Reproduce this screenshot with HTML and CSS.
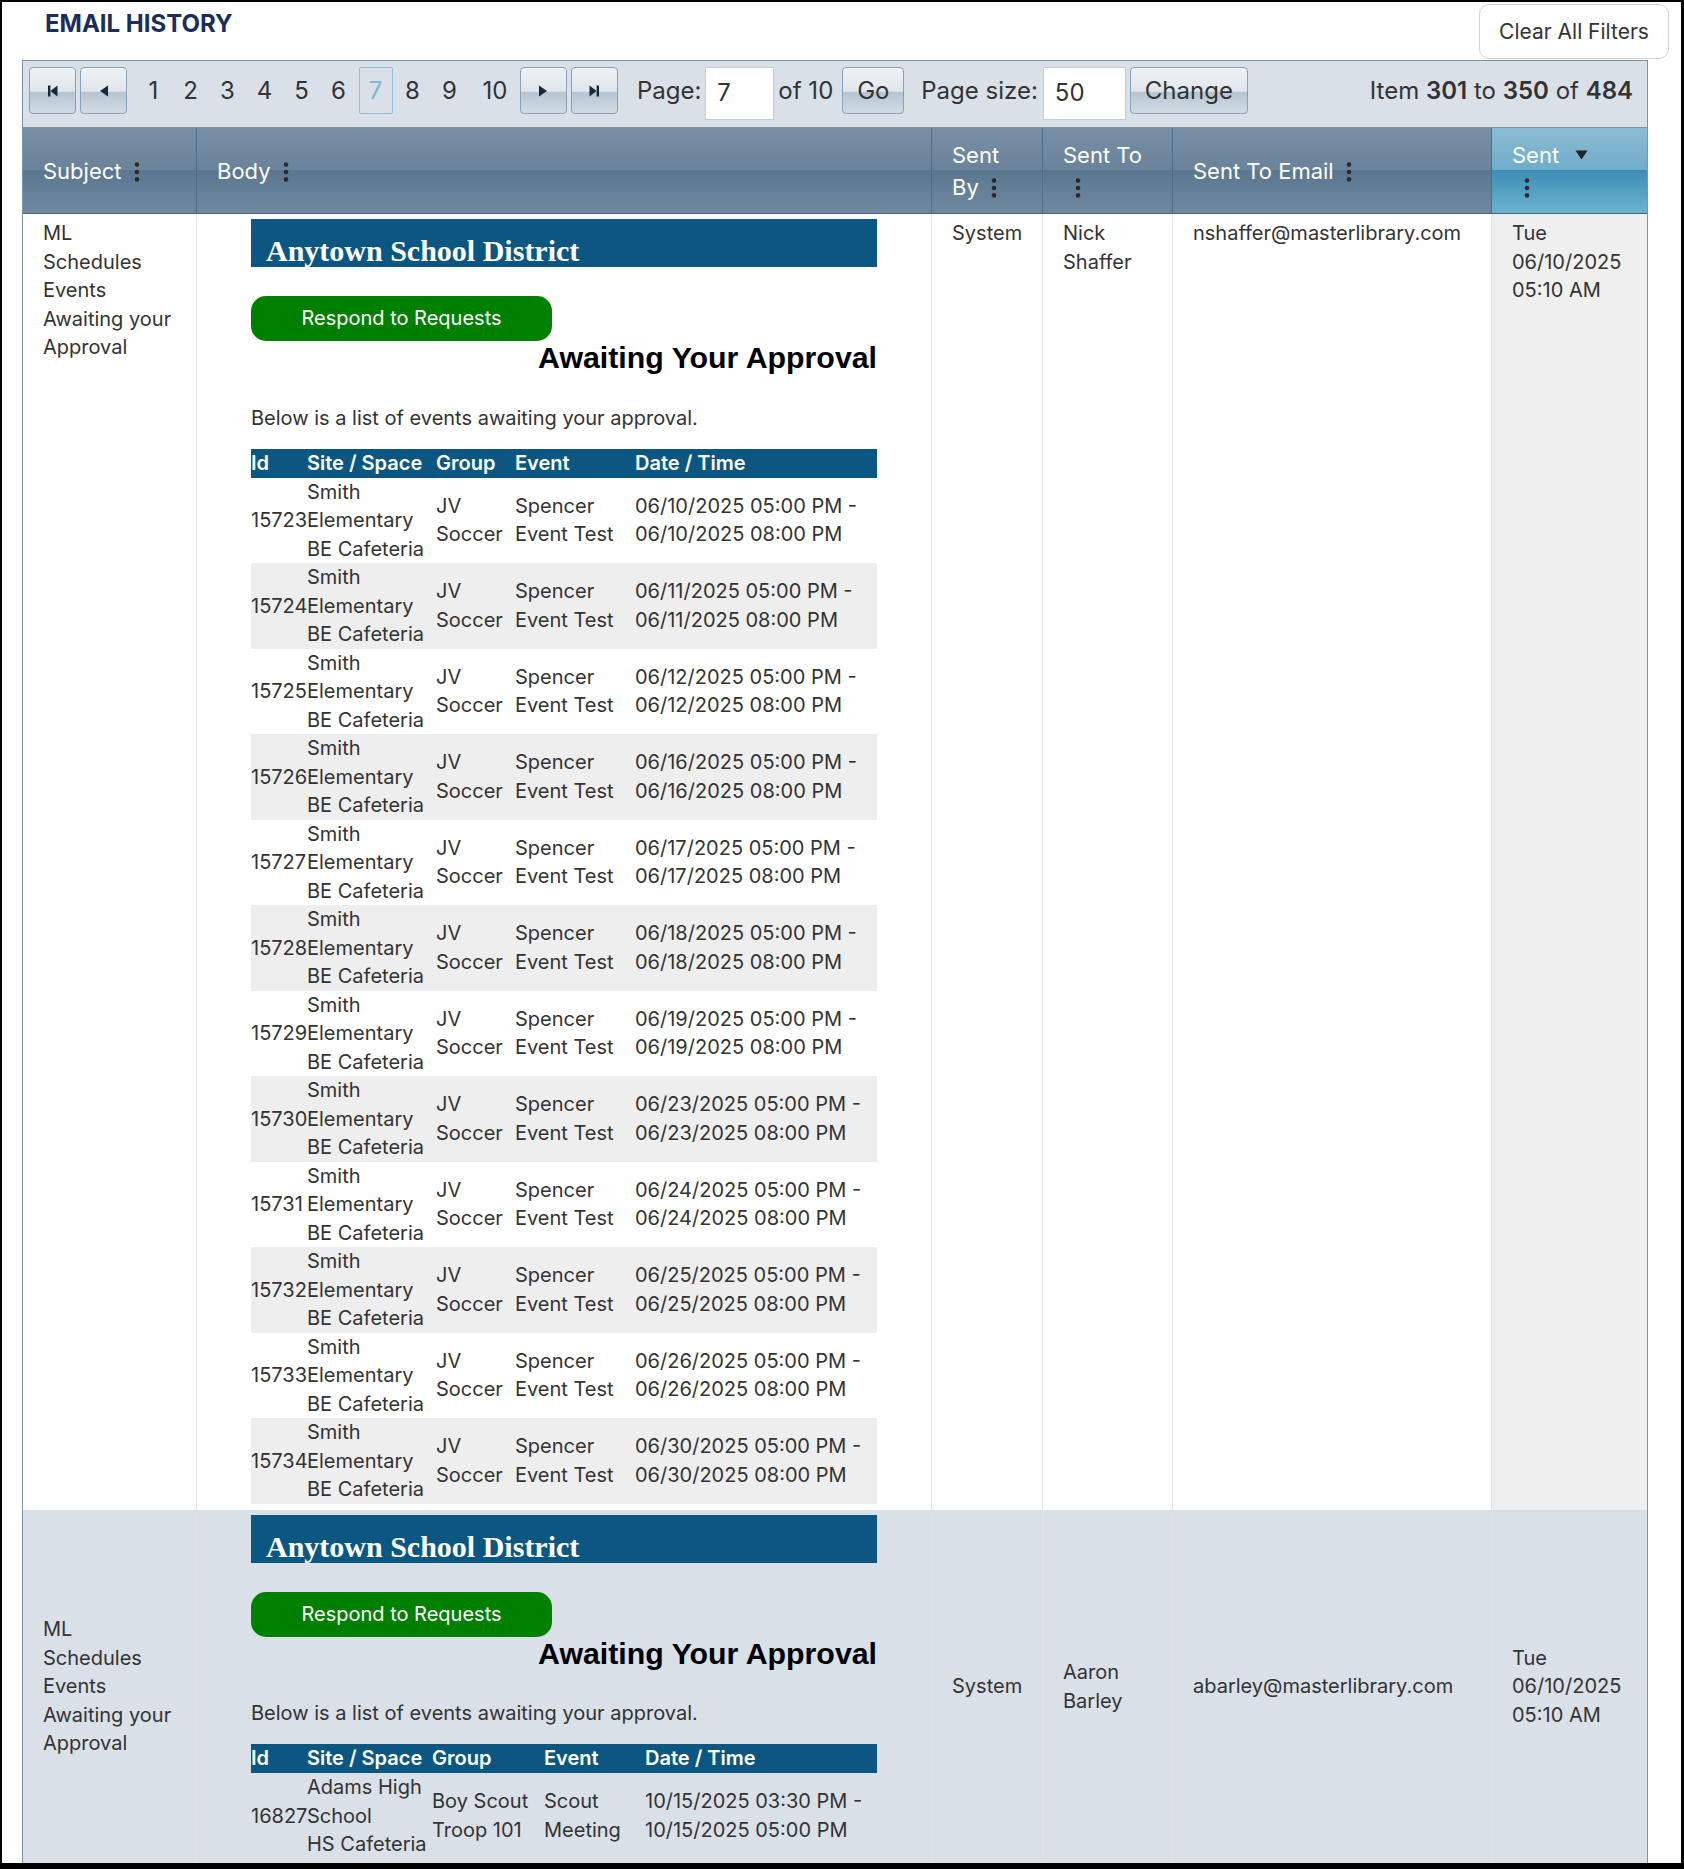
FILE: index.html
```html
<!DOCTYPE html>
<html lang="en">
<head>
  <meta charset="UTF-8">
  <title>Email History</title>
  <link rel="stylesheet" href="styles.css">
</head>
<body>
<div class="frame">
  <div class="page-head">
    <h1 class="page-title">EMAIL HISTORY</h1>
    <button class="clear-btn" type="button">Clear All Filters</button>
  </div>

  <div class="grid-wrap">
    <!-- pager -->
    <div class="pager">
      <button class="pg-btn" type="button" title="First page">
        <svg viewBox="0 0 16 16" width="16" height="16"><rect x="3" y="2.5" width="2.4" height="11" fill="#17283a"/><path d="M12.5 2.5 L5.4 8 L12.5 13.5 Z" fill="#17283a"/></svg>
      </button>
      <button class="pg-btn" type="button" title="Previous page">
        <svg viewBox="0 0 16 16" width="16" height="16"><path d="M12 2.5 L4 8 L12 13.5 Z" fill="#17283a"/></svg>
      </button>
      <div class="pg-nums">
        <a class="pg-num">1</a>
        <a class="pg-num">2</a>
        <a class="pg-num">3</a>
        <a class="pg-num">4</a>
        <a class="pg-num">5</a>
        <a class="pg-num">6</a>
        <a class="pg-num current">7</a>
        <a class="pg-num">8</a>
        <a class="pg-num">9</a>
        <a class="pg-num">10</a>
      </div>
      <button class="pg-btn" type="button" title="Next page">
        <svg viewBox="0 0 16 16" width="16" height="16"><path d="M4 2.5 L12 8 L4 13.5 Z" fill="#17283a"/></svg>
      </button>
      <button class="pg-btn" type="button" title="Last page">
        <svg viewBox="0 0 16 16" width="16" height="16"><path d="M3.5 2.5 L10.6 8 L3.5 13.5 Z" fill="#17283a"/><rect x="10.6" y="2.5" width="2.4" height="11" fill="#17283a"/></svg>
      </button>
      <span class="pg-label page-label">Page:</span>
      <input class="pg-input page-input" type="text" value="7">
      <span class="pg-label of-label">of 10</span>
      <button class="pg-btn text-btn go-btn" type="button">Go</button>
      <span class="pg-label size-label">Page size:</span>
      <input class="pg-input size-input" type="text" value="50">
      <button class="pg-btn text-btn change-btn" type="button">Change</button>
      <span class="pg-label pg-info">Item <b>301</b> to <b>350</b> of <b>484</b></span>
    </div>

    <table class="grid">
      <colgroup>
        <col class="c-subject">
        <col class="c-body">
        <col class="c-by">
        <col class="c-to">
        <col class="c-email">
        <col class="c-sent">
      </colgroup>
      <thead>
        <tr>
          <th>Subject<span class="kebab"><svg viewBox="0 0 22 20" width="22" height="20"><circle cx="11" cy="2.6" r="2.3"/><circle cx="11" cy="10" r="2.3"/><circle cx="11" cy="17.4" r="2.3"/></svg></span></th>
          <th>Body<span class="kebab"><svg viewBox="0 0 22 20" width="22" height="20"><circle cx="11" cy="2.6" r="2.3"/><circle cx="11" cy="10" r="2.3"/><circle cx="11" cy="17.4" r="2.3"/></svg></span></th>
          <th>Sent By<span class="kebab"><svg viewBox="0 0 22 20" width="22" height="20"><circle cx="11" cy="2.6" r="2.3"/><circle cx="11" cy="10" r="2.3"/><circle cx="11" cy="17.4" r="2.3"/></svg></span></th>
          <th>Sent To<span class="kebab"><svg viewBox="0 0 22 20" width="22" height="20"><circle cx="11" cy="2.6" r="2.3"/><circle cx="11" cy="10" r="2.3"/><circle cx="11" cy="17.4" r="2.3"/></svg></span></th>
          <th>Sent To Email<span class="kebab"><svg viewBox="0 0 22 20" width="22" height="20"><circle cx="11" cy="2.6" r="2.3"/><circle cx="11" cy="10" r="2.3"/><circle cx="11" cy="17.4" r="2.3"/></svg></span></th>
          <th class="sorted">Sent<span class="sort-icon"><svg viewBox="0 0 13 10" width="13" height="10"><path d="M0.5 0.5 H12.5 L6.5 9.5 Z" fill="#222"/></svg></span><span class="kebab"><svg viewBox="0 0 22 20" width="22" height="20"><circle cx="11" cy="2.6" r="2.3"/><circle cx="11" cy="10" r="2.3"/><circle cx="11" cy="17.4" r="2.3"/></svg></span></th>
        </tr>
      </thead>
      <tbody>
        <tr class="top">
          <td>ML Schedules Events Awaiting your Approval</td>
          <td class="body-cell">
            <div class="mail">
              <div class="mail-banner">Anytown School District</div>
              <a class="respond-btn">Respond to Requests</a>
              <h2 class="mail-title">Awaiting Your Approval</h2>
              <p class="mail-intro">Below is a list of events awaiting your approval.</p>
              <table class="events">
                <colgroup>
                  <col class="ev-id"><col class="ev-site"><col class="ev-group"><col class="ev-event"><col class="ev-date">
                </colgroup>
                <thead>
                  <tr><th>Id</th><th>Site / Space</th><th>Group</th><th>Event</th><th>Date / Time</th></tr>
                </thead>
                <tbody>
                  <tr><td>15723</td><td>Smith Elementary<br>BE Cafeteria</td><td>JV Soccer</td><td>Spencer Event Test</td><td>06/10/2025 05:00 PM -<br>06/10/2025 08:00 PM</td></tr>
                  <tr><td>15724</td><td>Smith Elementary<br>BE Cafeteria</td><td>JV Soccer</td><td>Spencer Event Test</td><td>06/11/2025 05:00 PM -<br>06/11/2025 08:00 PM</td></tr>
                  <tr><td>15725</td><td>Smith Elementary<br>BE Cafeteria</td><td>JV Soccer</td><td>Spencer Event Test</td><td>06/12/2025 05:00 PM -<br>06/12/2025 08:00 PM</td></tr>
                  <tr><td>15726</td><td>Smith Elementary<br>BE Cafeteria</td><td>JV Soccer</td><td>Spencer Event Test</td><td>06/16/2025 05:00 PM -<br>06/16/2025 08:00 PM</td></tr>
                  <tr><td>15727</td><td>Smith Elementary<br>BE Cafeteria</td><td>JV Soccer</td><td>Spencer Event Test</td><td>06/17/2025 05:00 PM -<br>06/17/2025 08:00 PM</td></tr>
                  <tr><td>15728</td><td>Smith Elementary<br>BE Cafeteria</td><td>JV Soccer</td><td>Spencer Event Test</td><td>06/18/2025 05:00 PM -<br>06/18/2025 08:00 PM</td></tr>
                  <tr><td>15729</td><td>Smith Elementary<br>BE Cafeteria</td><td>JV Soccer</td><td>Spencer Event Test</td><td>06/19/2025 05:00 PM -<br>06/19/2025 08:00 PM</td></tr>
                  <tr><td>15730</td><td>Smith Elementary<br>BE Cafeteria</td><td>JV Soccer</td><td>Spencer Event Test</td><td>06/23/2025 05:00 PM -<br>06/23/2025 08:00 PM</td></tr>
                  <tr><td>15731</td><td>Smith Elementary<br>BE Cafeteria</td><td>JV Soccer</td><td>Spencer Event Test</td><td>06/24/2025 05:00 PM -<br>06/24/2025 08:00 PM</td></tr>
                  <tr><td>15732</td><td>Smith Elementary<br>BE Cafeteria</td><td>JV Soccer</td><td>Spencer Event Test</td><td>06/25/2025 05:00 PM -<br>06/25/2025 08:00 PM</td></tr>
                  <tr><td>15733</td><td>Smith Elementary<br>BE Cafeteria</td><td>JV Soccer</td><td>Spencer Event Test</td><td>06/26/2025 05:00 PM -<br>06/26/2025 08:00 PM</td></tr>
                  <tr><td>15734</td><td>Smith Elementary<br>BE Cafeteria</td><td>JV Soccer</td><td>Spencer Event Test</td><td>06/30/2025 05:00 PM -<br>06/30/2025 08:00 PM</td></tr>
                </tbody>
              </table>
            </div>
          </td>
          <td>System</td>
          <td>Nick Shaffer</td>
          <td>nshaffer@masterlibrary.com</td>
          <td class="sorted">Tue 06/10/2025 05:10 AM</td>
        </tr>

        <tr class="alt">
          <td>ML Schedules Events Awaiting your Approval</td>
          <td class="body-cell">
            <div class="mail">
              <div class="mail-banner">Anytown School District</div>
              <a class="respond-btn">Respond to Requests</a>
              <h2 class="mail-title">Awaiting Your Approval</h2>
              <p class="mail-intro">Below is a list of events awaiting your approval.</p>
              <table class="events events-wide-group">
                <colgroup>
                  <col class="ev-id"><col class="ev-site"><col class="ev-group"><col class="ev-event"><col class="ev-date">
                </colgroup>
                <thead>
                  <tr><th>Id</th><th>Site / Space</th><th>Group</th><th>Event</th><th>Date / Time</th></tr>
                </thead>
                <tbody>
                  <tr><td>16827</td><td>Adams High School<br>HS Cafeteria</td><td>Boy Scout Troop 101</td><td>Scout Meeting</td><td>10/15/2025 03:30 PM -<br>10/15/2025 05:00 PM</td></tr>
                </tbody>
              </table>
            </div>
          </td>
          <td>System</td>
          <td>Aaron Barley</td>
          <td>abarley@masterlibrary.com</td>
          <td class="sorted">Tue 06/10/2025 05:10 AM</td>
        </tr>

        <!-- next record starts below the fold -->
        <tr class="top filler">
          <td></td>
          <td class="body-cell"></td>
          <td></td>
          <td></td>
          <td></td>
          <td class="sorted"></td>
        </tr>
      </tbody>
    </table>
  </div>
</div>
</body>
</html>
```

FILE: styles.css
```css
body {
  margin: 0;
  font-family: Inter, "Noto Sans", Arial, sans-serif;
  color: #333;
  background: #fff;
}

.frame {
  height: 1869px;
  box-sizing: border-box;
  border: 3px solid #000;
  border-top-width: 2px;
  border-left-width: 2px;
  border-bottom-width: 6px;
  overflow: hidden;
  background: #fff;
}

/* title row */
.page-head {
  display: flex;
  justify-content: space-between;
  align-items: flex-start;
  height: 58px;
  box-sizing: border-box;
  padding: 2px 12px 0 43px;
}

.page-title {
  margin: 5px 0 0;
  font-size: 24px;
  font-weight: 700;
  color: #1b2d5b;
}

.clear-btn {
  width: 190px;
  height: 55px;
  background: #fff;
  border: 1px solid #d2d2d2;
  border-radius: 10px;
  font-family: Inter, "Noto Sans", Arial, sans-serif;
  font-size: 21px;
  color: #333;
}

.grid-wrap {
  margin: 0 33px 0 20px;
  border-left: 1px solid #7e93a8;
  border-right: 1px solid #7e93a8;
}

/* pager toolbar */
.pager {
  display: flex;
  align-items: flex-start;
  height: 68px;
  box-sizing: border-box;
  padding: 6px 14px 0 6px;
  background: #dae0e7;
  border-top: 1px solid #7e93a8;
  border-bottom: 1px solid #7e93a8;
  font-size: 24px;
}

.pg-btn {
  display: flex;
  align-items: center;
  justify-content: center;
  width: 47px;
  height: 47px;
  box-sizing: border-box;
  margin-right: 4px;
  padding: 0;
  border: 1px solid #8aa0b4;
  border-radius: 4px;
  background: linear-gradient(#eef2f5, #dfe6eb 52%, #b4c4d0 53%, #d2dce4);
  font-family: inherit;
  font-size: 24px;
  color: #333;
}

.pg-nums {
  display: flex;
  margin: 0 2px 0 4px;
}

.pg-num {
  min-width: 34px;
  height: 47px;
  box-sizing: border-box;
  margin: 0 1.5px;
  padding: 0 8px;
  border: 1px solid transparent;
  border-radius: 2px;
  line-height: 45px;
  text-align: center;
  color: #333;
}

.pg-num:last-child {
  padding-left: 12px;
}

.pg-num.current {
  border-color: #8cc1da;
  color: #7fb6d3;
}

.pg-label {
  line-height: 47px;
  white-space: nowrap;
}

.page-label { margin-left: 15px; }
.of-label { margin-left: 4px; }
.size-label { margin-left: 17px; }

.pg-input {
  height: 53px;
  box-sizing: border-box;
  padding: 0 11px 2px;
  border: 1px solid #c3ccd4;
  background: #fff;
  font-family: inherit;
  font-size: 24px;
  color: #333;
}

.page-input { width: 69px; margin-left: 4px; }
.size-input { width: 83px; margin-left: 5px; }

.text-btn { margin-right: 0; }
.go-btn { width: 62px; margin-left: 9px; }
.change-btn { width: 118px; margin-left: 4px; }

.pg-info { margin-left: auto; }

.pg-info b {
  font-weight: 600;
}

/* main grid */
.grid {
  width: 100%;
  table-layout: fixed;
  border-collapse: separate;
  border-spacing: 0;
  font-size: 20px;
  line-height: 28.6px;
}

.c-subject { width: 173px; }
.c-body { width: 735px; }
.c-by { width: 111px; }
.c-to { width: 130px; }
.c-email { width: 319px; }
.c-sent { width: 156px; }

.grid > thead > tr {
  height: 86px;
}

.grid > thead > tr > th {
  padding: 0 22px 0 20px;
  text-align: left;
  vertical-align: middle;
  font-size: 22px;
  font-weight: 400;
  line-height: 32px;
  color: #fff;
  background: linear-gradient(#7790a5, #6a839a 50%, #5b7790 50%, #6f89a0);
  border-bottom: 1px solid #4a647e;
}

.grid > thead > tr > th + th {
  border-left: 1px solid #526c86;
}

.grid > thead > tr > th.sorted {
  background: linear-gradient(#8cbbd4, #6eaccb 50%, #3c8cb6 50%, #6cb5d0);
}

.kebab {
  display: inline-block;
  width: 22px;
  height: 20px;
  margin-left: 4px;
  vertical-align: -3px;
  fill: #2b2b2b;
}

.kebab svg {
  display: block;
}

.sort-icon {
  display: inline-block;
  width: 44px;
  height: 10px;
  overflow: hidden;
  text-align: center;
  vertical-align: 3px;
}

.sort-icon svg {
  display: block;
  margin: 0 auto;
}

.grid > tbody > tr > td {
  padding: 5px 22px 6px 20px;
  vertical-align: top;
  background: #fff;
}

.grid > tbody > tr > td + td {
  border-left: 1px solid #dfe3e8;
}

.grid > tbody > tr > td.sorted {
  background: #efefef;
}

.grid > tbody > tr.alt > td,
.grid > tbody > tr.alt > td.sorted {
  vertical-align: middle;
  background: #dae0e7;
}

.grid > tbody > tr > td.body-cell {
  padding-left: 20px;
  padding-right: 20px;
}

.grid > tbody > tr.filler > td {
  height: 200px;
}

/* email body preview */
.mail {
  width: 626px;
  margin: 0 auto;
}

.mail-banner {
  height: 48px;
  box-sizing: border-box;
  padding: 17px 0 0 15px;
  background: #0b5781;
  color: #fff;
  font-family: "Liberation Serif", "Times New Roman", serif;
  font-size: 30px;
  font-weight: 700;
  line-height: 30px;
  white-space: nowrap;
}

.respond-btn {
  display: block;
  width: 301px;
  height: 45px;
  margin-top: 29px;
  border-radius: 15px;
  background: #008000;
  color: #fff;
  text-align: center;
  line-height: 45px;
  font-size: 20px;
}

.mail-title {
  margin: 0;
  text-align: right;
  font-family: "Liberation Sans", Arial, sans-serif;
  font-size: 30.3px;
  font-weight: 700;
  line-height: 34.5px;
  color: #000;
}

.mail-intro {
  margin: 28px 0 17px;
  font-size: 20px;
  line-height: 28px;
}

.events {
  width: 100%;
  table-layout: fixed;
  border-collapse: collapse;
  border-spacing: 0;
  font-size: 20px;
  line-height: 28.5px;
}

.ev-id { width: 56px; }
.ev-site { width: 129px; }
.ev-group { width: 79px; }
.ev-event { width: 120px; }
.ev-date { width: 242px; }

.events-wide-group .ev-site { width: 125px; }
.events-wide-group .ev-group { width: 112px; }
.events-wide-group .ev-event { width: 101px; }
.events-wide-group .ev-date { width: 232px; }

.events th {
  height: 29px;
  padding: 0;
  text-align: left;
  font-weight: 600;
  line-height: 29px;
  color: #fff;
  background: #0b5781;
  white-space: nowrap;
}

.events td {
  padding: 0;
  vertical-align: middle;
}

.events tbody tr:nth-child(even) td {
  background: #eeeeee;
}
```
